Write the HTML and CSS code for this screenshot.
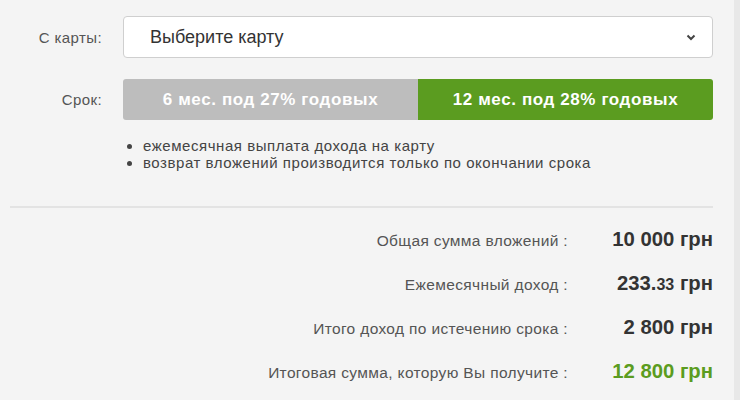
FILE: index.html
```html
<!DOCTYPE html>
<html lang="ru">
<head>
<meta charset="utf-8">
<title>Депозит</title>
<link rel="stylesheet" href="styles.css">
</head>
<body>
<div class="page">
  <div class="form-row">
    <div class="label">С карты:</div>
    <div class="select">
      <span class="select-text">Выберите карту</span>
      <svg class="chevron" width="10" height="7" viewBox="0 0 10 7"><polyline points="1.5,1.5 5,5 8.5,1.5" fill="none" stroke="#444" stroke-width="2"/></svg>
    </div>
  </div>
  <div class="form-row term-row">
    <div class="label">Срок:</div>
    <div class="toggle">
      <div class="opt opt-off">6 мес. под 27% годовых</div>
      <div class="opt opt-on">12 мес. под 28% годовых</div>
    </div>
  </div>
  <ul class="notes">
    <li>ежемесячная выплата дохода на карту</li>
    <li>возврат вложений производится только по окончании срока</li>
  </ul>
  <div class="divider"></div>
  <div class="results">
    <div class="res-row"><span class="res-label">Общая сумма вложений :</span><span class="res-value">10 000 грн</span></div>
    <div class="res-row"><span class="res-label">Ежемесячный доход :</span><span class="res-value">233.<small>33</small> грн</span></div>
    <div class="res-row"><span class="res-label">Итого доход по истечению срока :</span><span class="res-value">2 800 грн</span></div>
    <div class="res-row"><span class="res-label">Итоговая сумма, которую Вы получите :</span><span class="res-value green">12 800 грн</span></div>
  </div>
</div>
<div class="strip"></div>
</body>
</html>
```
FILE: styles.css
```css
html, body {
  margin: 0;
  height: 100%;
}
body {
  background: #f4f4f4;
  display: flex;
  font-family: "Liberation Sans", Arial, sans-serif;
  overflow: hidden;
}
.page {
  flex: 1;
  padding: 16px 21px 0 10px;
}
.strip {
  width: 6px;
  background: #e8e8e8;
}
.form-row {
  display: flex;
  align-items: center;
}
.label {
  width: 92px;
  margin-right: 21px;
  text-align: right;
  font-size: 15px;
  letter-spacing: 0.4px;
  color: #555;
}
.select {
  flex: 1;
  height: 42px;
  box-sizing: border-box;
  border: 1px solid #cfcfcf;
  border-radius: 4px;
  background: #fff;
  display: flex;
  align-items: center;
  justify-content: space-between;
  padding: 0 16px 0 26px;
}
.select-text {
  font-size: 18px;
  color: #333;
}
.term-row {
  margin-top: 21px;
}
.toggle {
  flex: 1;
  display: flex;
  height: 41px;
  border-radius: 3px;
  overflow: hidden;
}
.opt {
  flex: 1;
  display: flex;
  align-items: center;
  justify-content: center;
  color: #fff;
  font-weight: bold;
  font-size: 17px;
  letter-spacing: 0.6px;
}
.opt-off {
  background: #bdbdbd;
}
.opt-on {
  background: #5b9c20;
}
.notes {
  margin: 17px 0 0 113px;
  padding-left: 20px;
  font-size: 15px;
  letter-spacing: 0.55px;
  line-height: 17px;
  color: #444;
}
.divider {
  height: 2px;
  background: #e3e3e3;
  margin-top: 35px;
}
.results {
  margin-top: 9px;
}
.res-row {
  display: flex;
  justify-content: flex-end;
  align-items: baseline;
  height: 44px;
  line-height: 44px;
}
.res-label {
  font-size: 15.5px;
  letter-spacing: 0.35px;
  color: #555;
}
.res-value {
  width: 145px;
  text-align: right;
  font-weight: bold;
  font-size: 20.3px;
  color: #333;
}
.res-value small {
  font-size: 16px;
}
.res-value.green {
  color: #5b9c20;
}
```
